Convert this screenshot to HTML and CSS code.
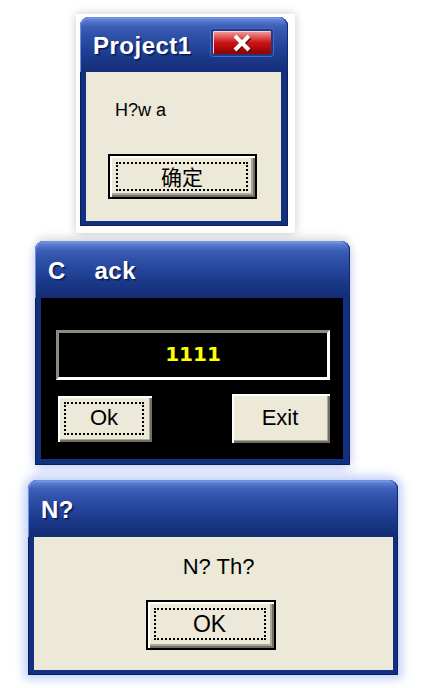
FILE: index.html
```html
<!DOCTYPE html>
<html>
<head>
<meta charset="utf-8">
<link rel="stylesheet" href="styles.css">
</head>
<body>
<div class="page">
  <div class="frame frame-1">
    <div class="win win-1">
      <div class="titlebar">
        <span class="title">Project1</span>
        <span class="close">
          <svg width="26" height="20" viewBox="0 0 26 20">
            <path d="M6 3 L20 17 M20 3 L6 17" stroke="#5a0000" stroke-width="4" fill="none" transform="translate(1,1)"/>
            <path d="M6 3 L20 17 M20 3 L6 17" stroke="#ffffff" stroke-width="4" fill="none"/>
          </svg>
        </span>
      </div>
      <div class="body body-1">
        <div class="msg msg-1">H?w a</div>
        <button class="btn btn-default btn-1"><span class="focus">确定</span></button>
      </div>
    </div>
  </div>

  <div class="frame frame-2">
    <div class="win win-2">
      <div class="titlebar">
        <span class="title title-2">C    ack</span>
      </div>
      <div class="body body-2">
        <div class="field">1111</div>
        <div class="btn-row">
          <button class="btn btn-raised btn-ok"><span class="focus">Ok</span></button>
          <button class="btn btn-raised btn-exit"><span class="nofocus">Exit</span></button>
        </div>
      </div>
    </div>
  </div>

  <div class="frame frame-3">
    <div class="win win-3">
      <div class="titlebar">
        <span class="title">N?</span>
      </div>
      <div class="body body-3">
        <div class="msg msg-3">N? Th?</div>
        <button class="btn btn-default btn-3"><span class="focus">OK</span></button>
      </div>
    </div>
  </div>
</div>
</body>
</html>
```

FILE: styles.css
```css
html, body {
  margin: 0;
  padding: 0;
  background: #ffffff;
}

.page {
  width: 448px;
  height: 688px;
  display: flex;
  flex-direction: column;
  align-items: flex-start;
  overflow: hidden;
  font-family: "Liberation Sans", Arial, sans-serif;
}

.frame-1 {
  margin-left: 76px;
  margin-top: 14px;
  background: #ffffff;
  padding: 3px 7px 7px 4px;
  box-shadow: 0 0 9px rgba(0, 0, 0, 0.22);
}

.frame-2 {
  margin-left: 35px;
  margin-top: 8px;
  box-shadow: 0 -4px 8px rgba(0, 0, 0, 0.12), 0 6px 12px rgba(120, 150, 240, 0.35);
  border-radius: 9px 9px 0 0;
}

.frame-3 {
  margin-left: 28px;
  margin-top: 15px;
  box-shadow: 0 0 10px 4px rgba(140, 170, 245, 0.55);
  border-radius: 9px 9px 0 0;
}

.win {
  display: flex;
  flex-direction: column;
  background: #13307f;
  border-radius: 9px 9px 0 0;
  box-shadow: inset 0 0 0 1px #0a1f63;
}

.win-1 { width: 208px; height: 209px; }
.win-2 { width: 315px; height: 224px; }
.win-3 { width: 370px; height: 195px; }

.titlebar {
  height: 55px;
  flex: 0 0 auto;
  display: flex;
  align-items: center;
  justify-content: space-between;
  padding: 0 15px 0 13px;
  border-radius: 9px 9px 0 0;
  background: linear-gradient(to bottom,
    #8aa6ea 0px,
    #5c7fd4 3px,
    #3d60b8 9px,
    #2f51a8 18px,
    #23449a 30px,
    #1a3888 42px,
    #142d77 55px);
  box-shadow: inset 1px 1px 0 #6d8fe0, inset -1px 0 0 #0f2a72;
}

.win-2 .titlebar, .win-3 .titlebar { height: 57px; }

.title {
  color: #ffffff;
  font-family: "Liberation Sans", Arial, sans-serif;
  font-weight: bold;
  font-size: 24px;
  letter-spacing: 0.5px;
  text-shadow: 1px 1px 0 #0b1a55, 2px 2px 0 rgba(10, 25, 80, 0.5);
  white-space: pre;
  margin-top: 2px;
}

.close {
  width: 58px;
  height: 23px;
  margin-top: -4px;
  display: flex;
  align-items: center;
  justify-content: center;
  border: 2px solid #1f3a86;
  border-radius: 3px;
  background: linear-gradient(to bottom, #f2a0a0 0%, #e25b5b 25%, #cc1414 50%, #b00808 75%, #8a0404 100%);
  box-shadow: inset 1px 1px 0 #ffd0d0, 0 0 0 1px #4768c0;
}

.body {
  flex: 1 1 auto;
  margin: 0 6px 5px 6px;
  background: #ece9d8;
  display: flex;
  flex-direction: column;
}

.body-1 {
  padding: 27px 0 0 22px;
  margin-right: 7px;
}

.msg {
  color: #000000;
  font-family: "Liberation Sans", Arial, sans-serif;
}

.msg-1 {
  font-size: 18px;
  line-height: 22px;
  margin-left: 7px;
}

.btn {
  padding: 0;
  margin: 0;
  background: #ece9d8;
  color: #000000;
  font-family: "Liberation Sans", Arial, sans-serif;
  display: flex;
  align-items: stretch;
  justify-content: stretch;
  cursor: default;
}

.btn-default {
  border: 2px solid #000000;
  box-shadow: inset 2px 2px 0 #ffffff, inset -2px -2px 0 #716f64, inset -4px -4px 0 #aca899;
}

.btn-raised {
  border: none;
  box-shadow: inset 2px 2px 0 #ffffff, inset -2px -2px 0 #716f64, inset -3px -3px 0 #aca899;
}

.focus, .nofocus {
  flex: 1 1 auto;
  display: flex;
  align-items: center;
  justify-content: center;
}

.focus {
  border: 2px dotted #000000;
}

.nofocus {
  border: 2px solid transparent;
}

.btn-1 {
  width: 149px;
  height: 45px;
  margin-top: 33px;
  padding: 6px 7px 6px 6px;
  font-family: "Noto Sans CJK SC", "Liberation Sans", sans-serif;
  font-size: 21px;
}

.btn-1 .focus { line-height: 1; }

.body-2 {
  background: #000000;
  margin: 0 7px 6px 6px;
  padding: 32px 13px 0 15px;
}

.field {
  height: 50px;
  box-sizing: border-box;
  border-top: 3px solid #8d8b80;
  border-left: 3px solid #8d8b80;
  border-bottom: 3px solid #ffffff;
  border-right: 3px solid #ffffff;
  background: #000000;
  color: #ffff00;
  font-family: "DejaVu Sans", sans-serif;
  font-weight: bold;
  font-size: 20px;
  display: flex;
  align-items: center;
  justify-content: center;
  padding-bottom: 2px;
}

.btn-row {
  display: flex;
  justify-content: space-between;
  align-items: center;
  margin-top: 14px;
  padding-left: 2px;
}

.btn-ok {
  width: 94px;
  height: 46px;
  padding: 6px 8px 7px 6px;
  font-size: 22px;
}

.btn-exit {
  width: 98px;
  height: 49px;
  padding: 6px 8px 7px 6px;
  font-size: 22px;
}

.body-3 {
  margin: 0 5px 5px 6px;
  align-items: center;
  padding-top: 17px;
}

.msg-3 {
  font-size: 22px;
  line-height: 26px;
  margin-left: 10px;
}

.btn-3 {
  width: 130px;
  height: 50px;
  margin-top: 20px;
  margin-right: 6px;
  padding: 6px 8px 8px 6px;
  font-size: 23px;
}
```
